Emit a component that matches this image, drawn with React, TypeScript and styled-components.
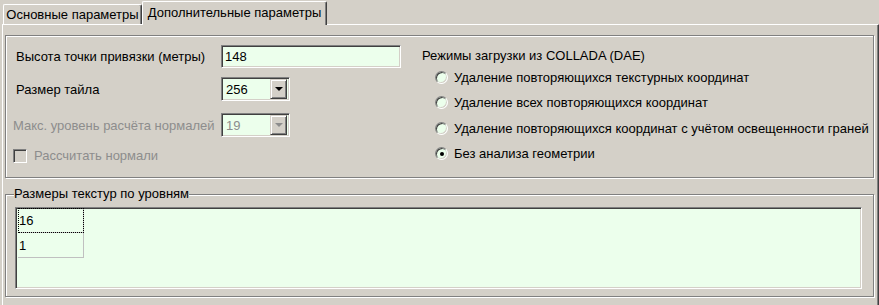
import React from "react";
import styled, { createGlobalStyle } from "styled-components";

const FACE = "#d4d0c8";
const FIELD = "#ecffec";

const GlobalStyle = createGlobalStyle`
	html, body {
		margin: 0;
		padding: 0;
		background: ${FACE};
	}
	body {
		font-family: "Liberation Sans", Tahoma, sans-serif;
		font-size: 13px;
		color: #000;
	}
`;

const Window = styled.div`
	width: 879px;
	height: 305px;
	overflow: hidden;
	background: ${FACE};
	display: flex;
	flex-direction: column;
`;

const TabStrip = styled.div`
	display: flex;
	align-items: flex-end;
	height: 24px;
	padding-left: 3px;
	position: relative;
	z-index: 1;
`;

interface TabProps {
	active?: boolean;
}
const Tab = styled.div<TabProps>`
	box-sizing: border-box;
	display: flex;
	align-items: center;
	justify-content: center;
	height: ${(p) => (p.active ? "24px" : "20px")};
	width: ${(p) => (p.active ? "185px" : "139px")};
	margin-bottom: ${(p) => (p.active ? "-1px" : "0")};
	padding-bottom: ${(p) => (p.active ? "3px" : "0")};
	background: ${FACE};
	border-top: 1px solid #fff;
	border-left: 1px solid #fff;
	border-right: 1px solid #404040;
	border-top-left-radius: 2px;
	border-top-right-radius: 2px;
	box-shadow: inset -1px 0 0 #808080;
	white-space: nowrap;
`;

const Panel = styled.div`
	box-sizing: border-box;
	margin-left: 2px;
	width: 877px;
	flex: 1;
	padding: 10px 4px 0 2px;
	border-top: 1px solid #fff;
	border-left: 1px solid #fff;
	border-right: 1px solid #404040;
	box-shadow: inset -1px 0 0 #808080;
`;

const TopGroup = styled.div`
	box-sizing: border-box;
	height: 143px;
	display: flex;
	padding: 9px 0 0 10px;
	border: 1px solid #808080;
	box-shadow: inset 1px 1px 0 #fff, 1px 1px 0 #fff;
`;

const FormColumn = styled.div`
	width: 406px;
	display: flex;
	flex-direction: column;
`;

interface RowProps {
	gap: number;
	h: number;
}
const Row = styled.div<RowProps>`
	display: flex;
	align-items: center;
	height: ${(p) => p.h}px;
	margin-top: ${(p) => p.gap}px;
`;

interface LabelProps {
	disabled?: boolean;
}
const Label = styled.span<LabelProps>`
	flex: none;
	width: ${(p) => (p.disabled ? "208px" : "205px")};
	margin-left: ${(p) => (p.disabled ? "-3px" : "0")};
	white-space: nowrap;
	color: ${(p) => (p.disabled ? "#8d8d8d" : "#000")};
`;

const Sunken = styled.div`
	box-sizing: border-box;
	border-top: 1px solid #808080;
	border-left: 1px solid #808080;
	border-right: 1px solid #fff;
	border-bottom: 1px solid #fff;
	box-shadow: inset 1px 1px 0 #404040, inset -1px -1px 0 ${FACE};
	background: ${FIELD};
`;

const TextBox = styled(Sunken)`
	width: 180px;
	height: 23px;
	display: flex;
	align-items: center;
	padding-left: 3px;
`;

interface ComboProps {
	disabled?: boolean;
}
const Combo = styled(Sunken)<ComboProps>`
	width: 69px;
	height: 24px;
	display: flex;
	align-items: center;
	justify-content: space-between;
	padding: 2px 2px 2px 4px;
	color: ${(p) => (p.disabled ? "#8d8d8d" : "#000")};
`;

const DropButton = styled.div`
	box-sizing: border-box;
	width: 17px;
	height: 20px;
	display: flex;
	align-items: center;
	justify-content: center;
	background: ${FACE};
	border-top: 1px solid ${FACE};
	border-left: 1px solid ${FACE};
	border-right: 1px solid #404040;
	border-bottom: 1px solid #404040;
	box-shadow: inset 1px 1px 0 #fff, inset -1px -1px 0 #808080;
`;

const Arrow = styled.span<ComboProps>`
	width: 0;
	height: 0;
	border-left: 4px solid transparent;
	border-right: 4px solid transparent;
	border-top: 4px solid ${(p) => (p.disabled ? "#8d8d8d" : "#000")};
`;

const CheckRow = styled.label`
	display: flex;
	align-items: center;
	gap: 7px;
	margin-left: -3px;
	color: #8d8d8d;
`;

const CheckBox = styled(Sunken)`
	width: 14px;
	height: 14px;
	background: ${FACE};
`;

const RadioColumn = styled.div`
	display: flex;
	flex-direction: column;
	padding-top: 3px;
`;

const RadioTitle = styled.div`
	height: 16px;
	line-height: 16px;
`;

const RadioList = styled.div`
	display: flex;
	flex-direction: column;
	gap: 10px;
	margin-top: 6px;
	padding-left: 13px;
`;

const RadioRow = styled.label`
	display: flex;
	align-items: center;
	gap: 6px;
	height: 15.3px;
	white-space: nowrap;
`;

interface RadioProps {
	checked?: boolean;
}
const Radio = styled.span<RadioProps>`
	box-sizing: border-box;
	position: relative;
	width: 13px;
	height: 13px;
	flex: none;
	border-radius: 50%;
	border: 1px solid;
	border-color: #808080 #fff #fff #808080;
	box-shadow: inset 1px 1px 0 #404040, inset -1px -1px 0 ${FACE};
	background: ${FIELD};
	&::after {
		content: "";
		display: ${(p) => (p.checked ? "block" : "none")};
		position: absolute;
		left: 3.5px;
		top: 3.5px;
		width: 4px;
		height: 4px;
		border-radius: 50%;
		background: #000;
	}
`;

const LevelsGroup = styled.fieldset`
	box-sizing: border-box;
	height: 110px;
	min-width: 0;
	margin: 9px 0 0 0;
	padding: 0 11px 7px 9px;
	border: 1px solid #808080;
	box-shadow: inset 1px 1px 0 #fff, 1px 1px 0 #fff;
	display: flex;
	flex-direction: column;
`;

const Legend = styled.legend`
	padding: 0;
	margin-left: -1px;
	line-height: 14px;
	background: ${FACE};
`;

const LevelsList = styled(Sunken)`
	flex: 1;
	margin-top: 6px;
	padding: 0 2px;
	display: flex;
	flex-direction: column;
	align-items: flex-start;
`;

interface CellProps {
	focused?: boolean;
}
const Cell = styled.div<CellProps>`
	box-sizing: border-box;
	width: 66px;
	height: 25px;
	display: flex;
	align-items: center;
	padding-left: 1px;
	border-right: 1px solid #c0c0c0;
	border-bottom: 1px solid #c0c0c0;
	outline: ${(p) => (p.focused ? "1px dotted #000" : "none")};
	outline-offset: -1px;
`;

const radios = [
	"Удаление повторяющихся текстурных координат",
	"Удаление всех повторяющихся координат",
	"Удаление повторяющихся координат с учётом освещенности граней",
	"Без анализа геометрии",
];

export default function App() {
	return (
		<Window>
			<GlobalStyle />
			<TabStrip>
				<Tab>Основные параметры</Tab>
				<Tab active>Дополнительные параметры</Tab>
			</TabStrip>
			<Panel>
				<TopGroup>
					<FormColumn>
						<Row gap={0} h={23}>
							<Label>Высота точки привязки (метры)</Label>
							<TextBox>148</TextBox>
						</Row>
						<Row gap={9} h={24}>
							<Label>Размер тайла</Label>
							<Combo>
								256
								<DropButton>
									<Arrow />
								</DropButton>
							</Combo>
						</Row>
						<Row gap={12} h={24}>
							<Label disabled>Макс. уровень расчёта нормалей</Label>
							<Combo disabled>
								19
								<DropButton>
									<Arrow disabled />
								</DropButton>
							</Combo>
						</Row>
						<Row gap={11} h={15}>
							<CheckRow>
								<CheckBox />
								Рассчитать нормали
							</CheckRow>
						</Row>
					</FormColumn>
					<RadioColumn>
						<RadioTitle>Режимы загрузки из COLLADA (DAE)</RadioTitle>
						<RadioList>
							{radios.map((text, i) => (
								<RadioRow key={text}>
									<Radio checked={i === radios.length - 1} />
									{text}
								</RadioRow>
							))}
						</RadioList>
					</RadioColumn>
				</TopGroup>
				<LevelsGroup>
					<Legend>Размеры текстур по уровням</Legend>
					<LevelsList>
						<Cell focused>16</Cell>
						<Cell>1</Cell>
					</LevelsList>
				</LevelsGroup>
			</Panel>
		</Window>
	);
}
